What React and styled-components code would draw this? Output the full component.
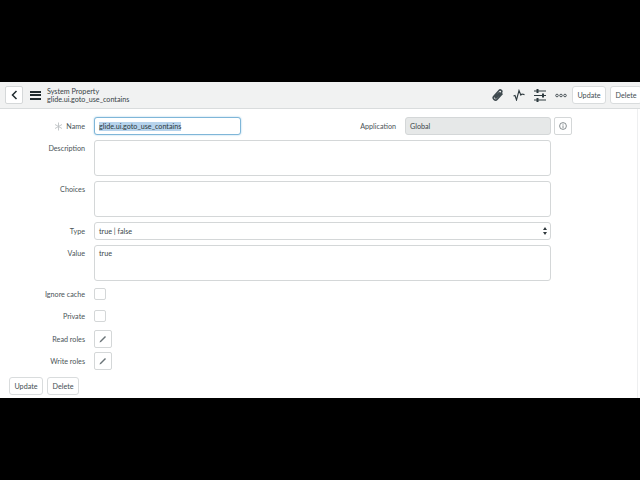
import React from 'react'
import styled, { createGlobalStyle } from 'styled-components'

const GlobalStyle = createGlobalStyle`
  html, body {
    margin: 0;
    background: #000;
    font-family: Lato, "Noto Sans", sans-serif;
  }
`

const Paperclip = () => (
  <svg width="12" height="12" viewBox="0 0 24 24" fill="none" stroke="#3f4a4f" strokeWidth="3">
    <path d="M21 9 10.5 20.5a4.6 4.6 0 0 1-6.8-6.2L14 3a3.2 3.2 0 0 1 4.8 4.3L8.8 17.3a1.4 1.4 0 0 1-2-2L15.5 6.5" />
  </svg>
)

const Pulse = () => (
  <svg width="12" height="12" viewBox="0 0 12 12" fill="none" stroke="#2e3a3f" strokeWidth="1.1">
    <path d="M0.5 7 2 6.5 3.5 11 6 1.5 7.8 6 9 5 11.5 5.6" />
  </svg>
)

const Sliders = () => (
  <svg width="12" height="13" viewBox="0 0 12 13" fill="#2e3a3f">
    <rect x="0" y="1.5" width="12" height="1" />
    <rect x="2.5" y="0" width="2" height="4" />
    <rect x="0" y="6" width="12" height="1" />
    <rect x="8" y="4.5" width="2" height="4" />
    <rect x="0" y="10.5" width="12" height="1" />
    <rect x="2.5" y="9" width="2" height="4" />
  </svg>
)

const Dots = () => (
  <svg width="12" height="5" viewBox="0 0 12 5" fill="none" stroke="#3f4a4f" strokeWidth="0.9">
    <circle cx="2" cy="2.5" r="1.3" />
    <circle cx="6" cy="2.5" r="1.3" />
    <circle cx="10" cy="2.5" r="1.3" />
  </svg>
)

const Pencil = () => (
  <svg width="8" height="8" viewBox="0 0 8 8" fill="#6b7478">
    <path d="M0.5 7.5 1 6 6 1 7 2 2 7Z" />
  </svg>
)

const Info = () => (
  <svg width="8" height="8" viewBox="0 0 8 8" fill="none" stroke="#566064" strokeWidth="0.7">
    <circle cx="4" cy="4" r="3.4" />
    <path d="M4 3.4V6.2M4 1.8V2.7" />
  </svg>
)

const Star = () => (
  <svg width="9" height="9" viewBox="0 0 9 9" fill="none" stroke="#bcc1c3" strokeWidth="0.9">
    <path d="M4.5 0.5V8.5M1 2.5 8 6.5M8 2.5 1 6.5" />
  </svg>
)

export default function App() {
  return (
    <>
      <GlobalStyle />
      <Page>
        <Frame>
          <Header>
            <BackButton>
              <svg width="7" height="10" viewBox="0 0 7 10" fill="none" stroke="#1f2a2e" strokeWidth="1.5">
                <path d="M5.5 1 1.5 5 5.5 9" />
              </svg>
            </BackButton>
            <Burger>
              <span />
              <span />
              <span />
            </Burger>
            <Titles>
              <div>System Property</div>
              <div>glide.ui.goto_use_contains</div>
            </Titles>
            <HeaderActions>
              <Paperclip />
              <Pulse />
              <Sliders />
              <Dots />
              <Buttons>
                <Button $width="34px">Update</Button>
                <Button $width="32px">Delete</Button>
              </Buttons>
            </HeaderActions>
          </Header>
          <Form>
            <Row>
              <Label><RequiredMark><Star /></RequiredMark>Name</Label>
              <NameInput><Selected>glide.ui.goto_use_contains</Selected></NameInput>
              <AppLabel>Application</AppLabel>
              <AppField>
                <ReadOnlyInput>Global</ReadOnlyInput>
                <IconButton><Info /></IconButton>
              </AppField>
            </Row>
            <Row $top>
              <Label $top>Description</Label>
              <TextArea />
            </Row>
            <Row $top>
              <Label $top>Choices</Label>
              <TextArea />
            </Row>
            <Row>
              <Label>Type</Label>
              <Select>
                true | false
                <svg width="4" height="8" viewBox="0 0 4 8" fill="#30393d">
                  <path d="M2 0 4 3H0ZM2 8 0 5H4Z" />
                </svg>
              </Select>
            </Row>
            <Row $top>
              <Label $top>Value</Label>
              <TextArea>true</TextArea>
            </Row>
            <Checks>
              <CheckRow>
                <Label>Ignore cache</Label>
                <Checkbox />
              </CheckRow>
              <CheckRow>
                <Label>Private</Label>
                <Checkbox />
              </CheckRow>
            </Checks>
            <Roles>
              <Row>
                <Label>Read roles</Label>
                <IconButton><Pencil /></IconButton>
              </Row>
              <Row>
                <Label>Write roles</Label>
                <IconButton><Pencil /></IconButton>
              </Row>
            </Roles>
            <FooterButtons>
              <Button $width="34px">Update</Button>
              <Button $width="32px">Delete</Button>
            </FooterButtons>
          </Form>
        </Frame>
      </Page>
    </>
  )
}

const Page = styled.div`
  width: 640px;
  height: 480px;
  padding-top: 82px;
  box-sizing: border-box;
  overflow: hidden;
`

const Frame = styled.div`
  width: 640px;
  height: 316px;
  background: #fff;
  color: #3c474b;
  font-size: 7.2px;
  overflow: hidden;
`

const Header = styled.header`
  height: 27px;
  box-sizing: border-box;
  display: flex;
  align-items: center;
  padding-left: 5px;
  background: #f1f2f2;
  border-bottom: 1px solid #d9dcdd;
`

const BackButton = styled.div`
  width: 18px;
  height: 18px;
  box-sizing: border-box;
  display: flex;
  align-items: center;
  justify-content: center;
  background: #fff;
  border: 1px solid #d5d8d9;
  border-radius: 2px;
`

const Burger = styled.div`
  margin-left: 7px;
  width: 11px;
  display: flex;
  flex-direction: column;
  gap: 1.5px;

  span {
    height: 2px;
    background: #1f2a2e;
  }
`

const Titles = styled.div`
  margin-left: 6px;
  padding-top: 2px;
  line-height: 8px;
  color: #374246;
`

const HeaderActions = styled.div`
  margin-left: auto;
  display: flex;
  align-items: center;
  gap: 9px;
`

const Buttons = styled.div`
  display: flex;
  gap: 4px;
  margin-right: -2px;
  margin-left: -4px;
`

const Button = styled.div`
  width: ${(p) => p.$width};
  height: 18px;
  box-sizing: border-box;
  display: flex;
  align-items: center;
  justify-content: center;
  background: #fff;
  border: 1px solid #d9dcdd;
  border-radius: 3px;
  color: #444e52;
`

const Form = styled.main`
  width: 638px;
  height: 289px;
  box-sizing: border-box;
  border-right: 1px solid #eeeff0;
  padding-top: 8px;
  display: flex;
  flex-direction: column;
  gap: 5px;
`

const Row = styled.div`
  display: flex;
  align-items: ${(p) => (p.$top ? 'flex-start' : 'center')};
  gap: 9px;
`

const Checks = styled.div`
  display: flex;
  flex-direction: column;
  gap: 10px;
  margin: 2px 0 3px;
`

const CheckRow = styled(Row)`
  height: 12px;
`

const Roles = styled.div`
  display: flex;
  flex-direction: column;
  gap: 4px;
  margin-bottom: 2px;
`

const Label = styled.label`
  width: 85px;
  flex: none;
  position: relative;
  text-align: right;
  padding-top: ${(p) => (p.$top ? '4px' : '0')};
  color: #4a5458;
`

const RequiredMark = styled.span`
  position: absolute;
  left: 54px;
  top: 0;
`

const fieldBorder = '1px solid #d4d7d8'

const NameInput = styled.div`
  width: 147px;
  height: 18px;
  box-sizing: border-box;
  display: flex;
  align-items: center;
  padding-left: 4px;
  background: #fff;
  border: 1px solid #7fb6d8;
  border-radius: 3px;
  box-shadow: 0 0 2px #9ccbe6;
`

const Selected = styled.span`
  background: #b6d3ec;
  color: #2c383c;
`

const AppLabel = styled.span`
  width: 146px;
  text-align: right;
  color: #4a5458;
`

const AppField = styled.div`
  display: flex;
  align-items: center;
  gap: 3px;
`

const ReadOnlyInput = styled.div`
  width: 146px;
  height: 18px;
  box-sizing: border-box;
  display: flex;
  align-items: center;
  padding-left: 4px;
  background: #e6e8e8;
  border: ${fieldBorder};
  border-radius: 3px;
`

const IconButton = styled.div`
  width: 18px;
  height: 18px;
  box-sizing: border-box;
  display: flex;
  align-items: center;
  justify-content: center;
  border: ${fieldBorder};
  border-radius: 2px;
  background: #fff;
`

const TextArea = styled.div`
  width: 457px;
  height: 36px;
  box-sizing: border-box;
  padding: 3px 4px;
  border: ${fieldBorder};
  border-radius: 3px;
  color: #3c474b;
`

const Select = styled.div`
  width: 457px;
  height: 18px;
  box-sizing: border-box;
  display: flex;
  align-items: center;
  justify-content: space-between;
  padding: 0 3px 0 4px;
  border: ${fieldBorder};
  border-radius: 3px;
`

const Checkbox = styled.div`
  width: 12px;
  height: 12px;
  box-sizing: border-box;
  border: ${fieldBorder};
  border-radius: 2px;
`

const FooterButtons = styled.div`
  display: flex;
  gap: 4px;
  padding-left: 9px;
`
